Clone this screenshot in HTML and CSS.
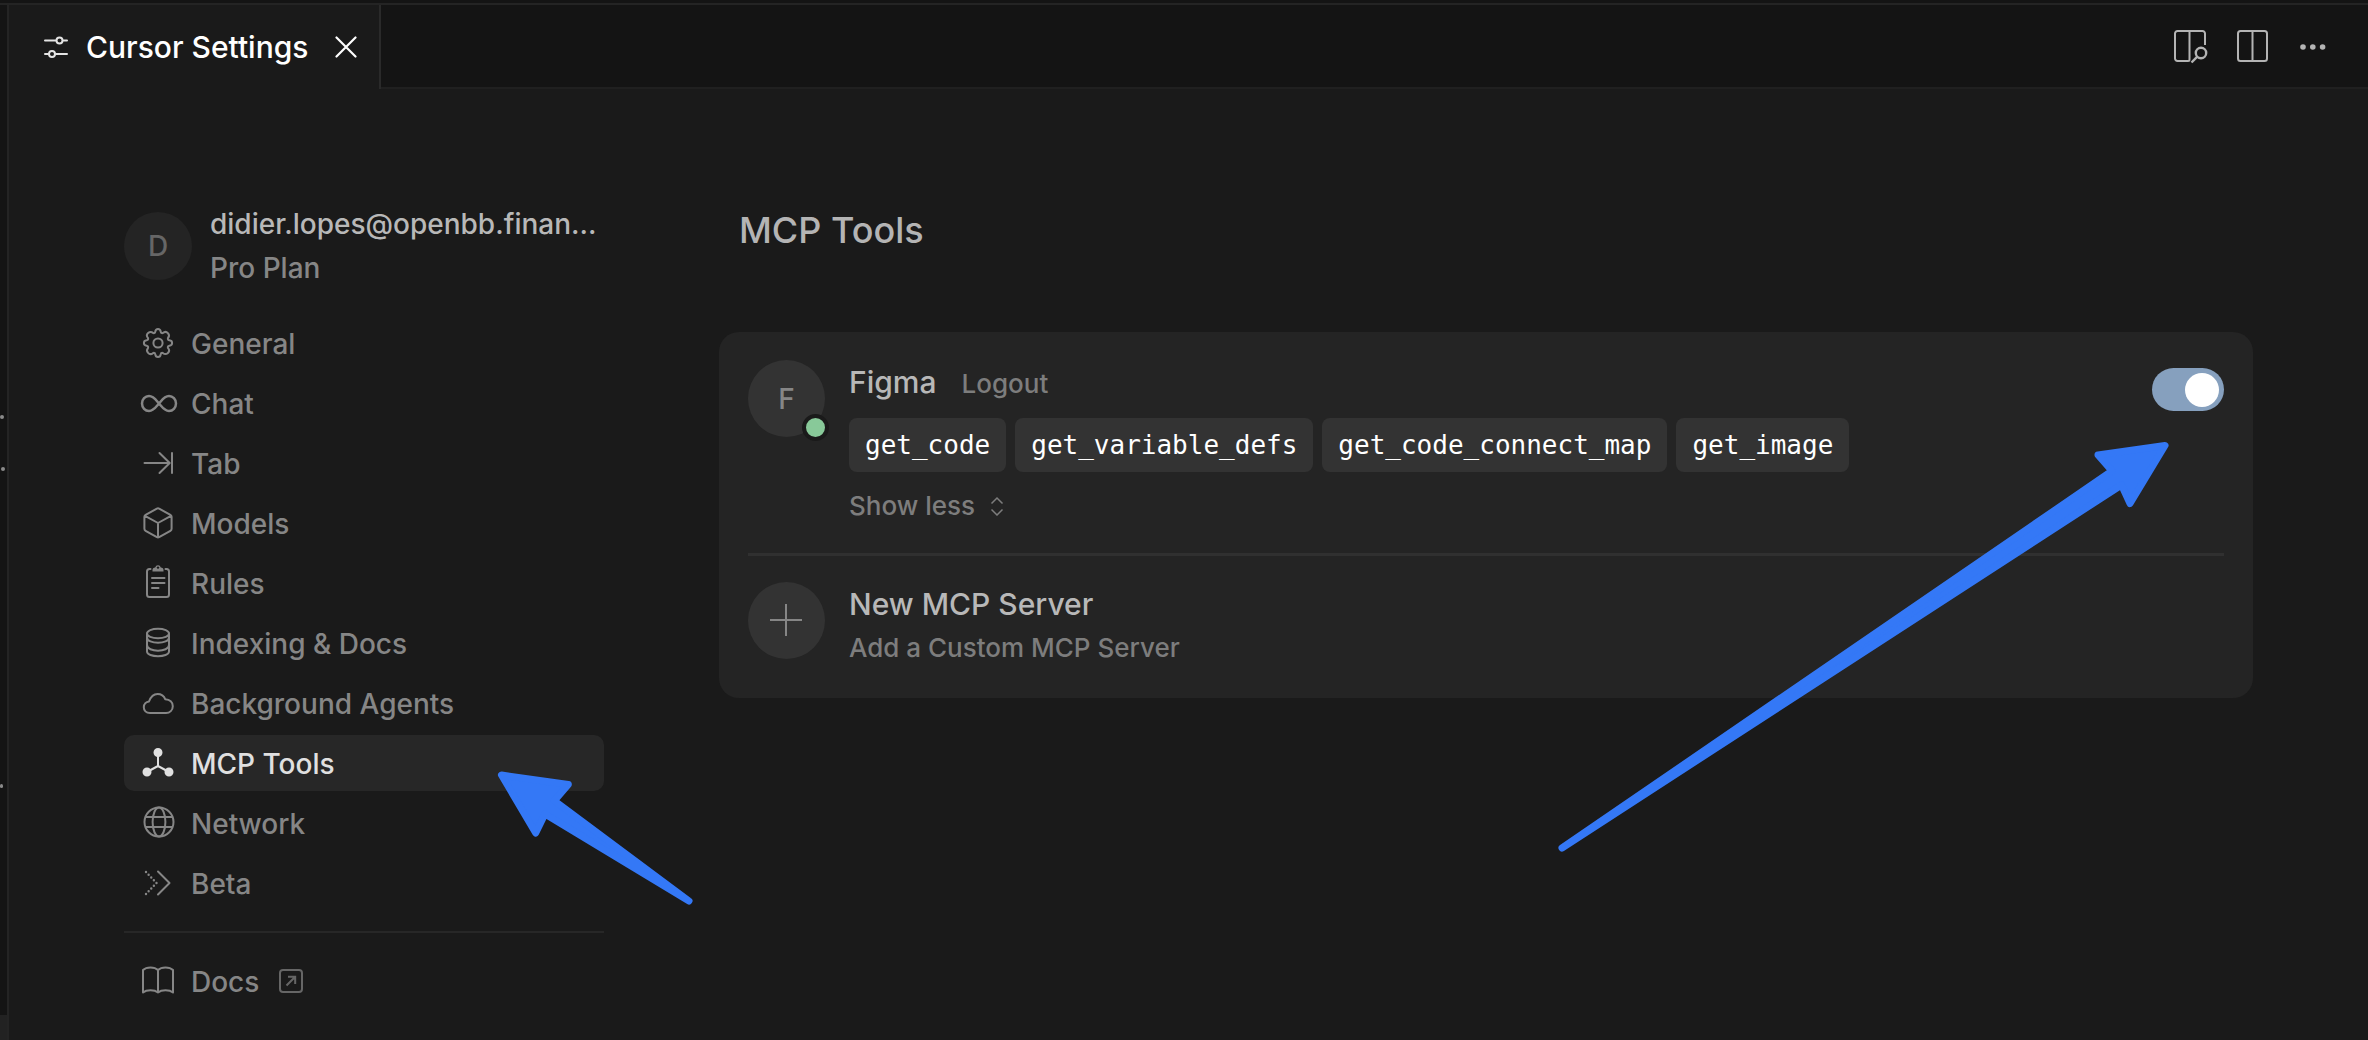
FILE: index.html
```
<!DOCTYPE html>
<html lang="en">
<head>
<meta charset="utf-8">
<title>Cursor Settings</title>
<link rel="stylesheet" href="styles.css">
</head>
<body>
<div class="window">
  <div class="edge" aria-hidden="true">
    <i class="speck speck-a"></i><i class="speck speck-b"></i><i class="speck speck-c"></i>
    <div class="edge-foot"></div>
  </div>
  <div class="editor">
    <header class="tabbar">
      <div class="tab">
        <svg class="tab-icon" width="24" height="22" viewBox="0 0 24 22" fill="none" stroke="currentColor" stroke-width="2" stroke-linecap="round"><path d="M1 4.500h11M19 4.500h4M1 18h4M12 18h11"/><circle cx="15.500" cy="4.500" r="3"/><circle cx="8" cy="18" r="3"/></svg>
        <span class="tab-title">Cursor Settings</span>
        <button class="icon-button" aria-label="Close tab"><svg width="22" height="22" viewBox="0 0 22 22" fill="none" stroke="currentColor" stroke-width="2.200" stroke-linecap="round"><path d="M1.500 1.500l19 19M20.500 1.500l-19 19"/></svg></button>
      </div>
      <div class="actions">
        <button class="icon-button" aria-label="Open preview"><svg width="34" height="34" viewBox="0 0 34 34" fill="none" stroke="currentColor" stroke-width="2"><path d="M14 31H3.500A2.500 2.500 0 0 1 1 28.500V3.500A2.500 2.500 0 0 1 3.500 1H28.500A2.500 2.500 0 0 1 31 3.500V15M15.500 1V29.500Q15.500 31 14 31"/><circle cx="27" cy="23" r="5.200" stroke-width="2.400"/><path d="M23.300 26.700L17.500 32.500" stroke-width="2.400"/></svg></button>
        <button class="icon-button" aria-label="Split editor"><svg width="34" height="34" viewBox="0 0 34 34" fill="none" stroke="currentColor" stroke-width="2"><rect x="1" y="1" width="29" height="30" rx="2.500"/><path d="M15.500 1v30"/></svg></button>
        <button class="icon-button" aria-label="More actions"><svg width="26" height="34" viewBox="0 0 26 34" fill="currentColor"><circle cx="3" cy="17" r="2.800"/><circle cx="12.800" cy="17" r="2.800"/><circle cx="22.600" cy="17" r="2.800"/></svg></button>
      </div>
    </header>

    <div class="settings">
      <aside class="sidebar">
        <div class="account">
          <div class="account-avatar">D</div>
          <div class="account-text">
            <div class="account-email">didier.lopes@openbb.finan...</div>
            <div class="account-plan">Pro Plan</div>
          </div>
        </div>
        <nav class="nav">
          <a class="nav-item" href="#general"><svg class="nav-icon" viewBox="0 0 32 32"><circle cx="16" cy="16" r="4.600"/><path d="M13.300 4.600Q13.600 1.900 16 1.900T18.700 4.600Q19 6.400 20.800 6.100Q23.600 3.600 25.900 6.100T25.900 11.200Q25.600 13.200 27.400 13.300Q30.100 13.600 30.100 16T27.400 18.700Q25.600 19 25.900 20.800Q28.400 23.600 25.900 25.900T20.800 25.900Q19 25.600 18.700 27.400Q18.400 30.100 16 30.100T13.300 27.400Q13 25.600 11.200 25.900Q8.400 28.400 6.100 25.900T6.100 20.800Q6.400 19 4.600 18.700Q1.900 18.400 1.900 16T4.600 13.300Q6.400 13 6.100 11.200Q3.600 8.400 6.100 6.100T11.200 6.100Q13 6.400 13.300 4.600Z"/></svg><span>General</span></a>
          <a class="nav-item" href="#chat"><svg class="nav-icon" viewBox="0 0 32 32"><path stroke-width="2.500" d="M17 16.500C20 13 22.500 9 27 9A7 7.500 0 0 1 27 24C22.500 24 20 20 17 16.500C14 13 11.500 9 7 9A7 7.500 0 0 0 7 24C11.500 24 14 20 17 16.500Z"/></svg><span>Chat</span></a>
          <a class="nav-item" href="#tab"><svg class="nav-icon" viewBox="0 0 32 32"><path d="M2.500 16h25M17.500 6l10.200 10l-10.200 10M30 6v20"/></svg><span>Tab</span></a>
          <a class="nav-item" href="#models"><svg class="nav-icon" viewBox="0 0 32 32"><path d="M14.900 1.600Q16 1 17.100 1.600L28.400 7.800Q29.600 8.500 29.600 9.800V21.800Q29.600 23.100 28.400 23.800L17.100 30.200Q16 30.800 14.900 30.200L3.600 23.800Q2.400 23.100 2.400 21.800V9.800Q2.400 8.500 3.600 7.800ZM3 8.800L16 16L29 8.800M16 16v14"/></svg><span>Models</span></a>
          <a class="nav-item" href="#rules"><svg class="nav-icon" viewBox="0 0 32 32"><path d="M8.500 2H7.500Q5 2 5 4.500V27.500Q5 30 7.500 30H24.500Q27 30 27 27.500V4.500Q27 2 24.500 2H23.500M10 11h12.500M10 16h12.500M10 21h6.500"/><path class="clip" d="M10.500 4.500V3Q10.500 .5 13.200 .5A2.900 2.900 0 0 1 18.800 .5Q21.500 .5 21.500 3V4.500Z"/><circle class="hole" cx="16" cy=".6" r="1.200"/></svg><span>Rules</span></a>
          <a class="nav-item" href="#indexing"><svg class="nav-icon" viewBox="0 0 32 32"><ellipse cx="16" cy="6.500" rx="11" ry="4.800"/><path d="M5 6.500V24.500C5 30.700 27 30.700 27 24.500V6.500M5 10.500C5 17.500 27 17.500 27 10.500M5 18C5 25.500 27 25.500 27 18"/></svg><span>Indexing &amp; Docs</span></a>
          <a class="nav-item" href="#agents"><svg class="nav-icon" viewBox="0 0 32 32"><path d="M8 26C4 26 1.800 23.500 1.800 20.300C1.800 17 4.200 14.800 7 14.500C8.500 10.500 11.500 7 15.500 7C19.500 7 22 9 23.200 12.200C27.800 12.500 30.800 15.300 30.800 19.200C30.800 23.200 27.800 26 24 26Z"/></svg><span>Background Agents</span></a>
          <a class="nav-item nav-item-active" href="#mcp" aria-current="page"><svg class="nav-icon" viewBox="0 0 32 32"><path d="M16 6v13M16 19L5 25M16 19l11 6"/><g class="solid"><circle cx="16" cy="5.500" r="3.500"/><circle cx="5" cy="25" r="3.500"/><circle cx="27" cy="25" r="3.500"/></g></svg><span>MCP Tools</span>
            <svg class="arrow arrow-nav" width="200" height="140" viewBox="0 0 200 140" aria-hidden="true"><path d="M7.500 8L74.300 17.500L60.400 33.700L195 134L51 47L41.700 66Z"/></svg></a>
          <a class="nav-item" href="#network"><svg class="nav-icon" viewBox="0 0 32 32"><circle cx="17" cy="15" r="14.500"/><ellipse cx="17" cy="15" rx="6.400" ry="14.500"/><path d="M4 10h26M4 20h26"/></svg><span>Network</span></a>
          <a class="nav-item" href="#beta"><svg class="nav-icon" viewBox="0 0 32 32"><path d="M16 4.500L27.500 16L16 27.500"/><path d="M4 5L14.500 16L4 27" stroke-width="2.400" stroke-dasharray="0 3.800"/></svg><span>Beta</span></a>
        </nav>
        <hr class="nav-rule">
        <a class="nav-item" href="#docs"><svg class="nav-icon" viewBox="0 0 32 32"><path d="M16 5C12.500 1.500 4.500 1.500 1 5V27.500C4.500 24.500 12.500 24.500 16 27.500C19.500 24.500 27.500 24.500 31 27.500V5C27.500 1.500 19.500 1.500 16 5ZM16 5V27.500"/></svg><span>Docs</span><svg class="external" width="24" height="24" viewBox="0 0 24 24" fill="none" stroke="currentColor" stroke-width="2"><rect x="1" y="1" width="22" height="22" rx="3"/><path d="M7.500 16.500L16 8M9 7.800h7.200V15"/></svg></a>
      </aside>

      <main class="content">
        <h1 class="title">MCP Tools</h1>
        <section class="card">
          <div class="server">
            <div class="server-avatar">F<span class="status" title="Connected"></span></div>
            <div class="server-body">
              <div class="server-head"><h2 class="server-name">Figma</h2><button class="text-button">Logout</button></div>
              <div class="tools"><code class="tool">get_code</code><code class="tool">get_variable_defs</code><code class="tool">get_code_connect_map</code><code class="tool">get_image</code></div>
              <button class="text-button show-less">Show less<svg width="14" height="20" viewBox="0 0 14 20" fill="none" stroke="currentColor" stroke-width="1.500"><path d="M1.500 7.500L7 2L12.500 7.500M1.500 13.500L7 19L12.500 13.500"/></svg></button>
            </div>
            <input class="toggle" type="checkbox" checked aria-label="Enable Figma server">
          </div>
          <button class="server server-new">
            <span class="server-avatar"><svg width="34" height="34" viewBox="0 0 34 34" fill="none" stroke="currentColor" stroke-width="2"><path d="M16 0v32M0 16h32"/></svg></span>
            <span class="server-body"><span class="server-name">New MCP Server</span><span class="server-note">Add a Custom MCP Server</span></span>
          </button>
          <svg class="arrow arrow-toggle" width="620" height="424" viewBox="0 0 620 424" aria-hidden="true"><path d="M614 15.500L547 25L561 41L11 418L570.500 55L579 73.500Z"/></svg>
        </section>
      </main>
    </div>
  </div>
</div>
</body>
</html>
```
FILE: styles.css
```
* { box-sizing: border-box; }
body {
  margin: 0;
  background: #1a1a1a;
  color: #b4b4b4;
  font-family: Inter, "Liberation Sans", sans-serif;
  font-size: 28px;
  line-height: 36px;
  font-weight: 500;
}
button { margin: 0; padding: 0; border: 0; background: none; color: inherit; font: inherit; text-align: left; }
svg { display: block; flex: none; }
h1, h2 { margin: 0; }

.window { display: flex; min-height: 100vh; border-top: 3px solid #141414; overflow: hidden; }
.edge { position: relative; display: flex; flex-direction: column; justify-content: flex-end; width: 9px; background: #141414; border-top: 2px solid #242424; border-right: 2px solid #242424; }
.edge-foot { height: 25px; background: #222; }
.speck { position: absolute; left: 0; width: 4px; height: 4px; border-radius: 2px; background: #8a8a8a; }
.speck-a { top: 410px; }
.speck-b { top: 462px; left: 1px; }
.speck-c { top: 779px; width: 3px; }
.editor { flex: 1; min-width: 0; }

.tabbar { display: flex; justify-content: space-between; height: 86px; background: #141414; border-top: 2px solid #242424; border-bottom: 2px solid #202020; }
.tab { display: flex; align-items: center; height: 84px; padding: 0 22px 0 35px; background: #1a1a1a; border-right: 2px solid #2a2a2a; color: #fff; font-size: 30px; }
.tab-title { margin: 0 27px 0 18px; }
.tab-icon { color: #e4e4e4; }
.actions { display: flex; align-items: center; gap: 29px; padding: 2px 42px 0 0; color: #b4b4b4; }

.settings { display: flex; gap: 115px; padding: 113px 115px 26px; }
.sidebar { width: 480px; flex: none; color: #868686; }
.account { display: flex; align-items: center; gap: 18px; height: 88px; margin-bottom: 25px; }
.account-avatar { display: flex; align-items: center; justify-content: center; width: 68px; height: 68px; border-radius: 50%; background: #242424; color: #666; }
.account-text { line-height: 44px; }
.account-email { color: #b8b8b8; white-space: nowrap; }

.nav { display: flex; flex-direction: column; gap: 4px; }
.nav-item { position: relative; display: flex; align-items: center; gap: 17px; height: 56px; padding: 0 18px; border-radius: 10px; color: inherit; text-decoration: none; }
.nav-item span { padding-top: 2px; }
.nav-icon { width: 32px; height: 32px; fill: none; stroke: currentColor; stroke-width: 2; stroke-linecap: round; stroke-linejoin: round; overflow: visible; }
.nav-icon .solid { fill: currentColor; }
.nav-icon .clip { fill: currentColor; stroke: none; }
.nav-icon .hole { fill: #1a1a1a; stroke: none; }
.nav-item-active { background: #272727; color: #e0e0e0; }
.nav-rule { height: 2px; margin: 20px 0; border: 0; background: #272727; }
.external { margin-left: 3px; color: #666; }

.content { flex: 1; min-width: 0; }
.title { padding: 6px 20px 0; font-size: 36px; line-height: 44px; font-weight: 500; color: #b4b4b4; }
.card { position: relative; margin-top: 80px; padding: 0 29px; border-radius: 20px; background: #242424; }
.server { display: flex; gap: 24px; width: 100%; padding: 28px 0 29px; border-bottom: 3px solid #303030; }
.server-new { border: 0; padding: 26px 0 32px; }
.server-avatar { position: relative; display: flex; align-items: center; justify-content: center; width: 77px; height: 77px; flex: none; border-radius: 50%; background: #333; color: #868686; }
.status { position: absolute; right: -4px; bottom: -4px; width: 27px; height: 27px; border: 4px solid #1a1a1a; border-radius: 50%; background: #88c999; }
.server-body { display: flex; flex: 1; flex-direction: column; min-width: 0; padding-top: 4px; }
.server-head { display: flex; align-items: baseline; gap: 25px; }
.server-name { color: #b8b8b8; font-size: 30px; line-height: 36px; font-weight: 500; }
.text-button, .server-note { color: #7d7d7d; font-size: 26px; line-height: 36px; }
.server-note { padding-top: 8px; }
.tools { display: flex; flex-wrap: wrap; gap: 9px; margin-top: 16px; }
.tool { padding: 0 16px; border-radius: 8px; background: #333; color: #fff; font: 26px/54px "DejaVu Sans Mono", monospace; }
.show-less { display: flex; align-items: center; gap: 15px; margin-top: 16px; }

.toggle { appearance: none; display: flex; justify-content: flex-end; align-items: center; width: 72px; height: 43px; margin: 8px 0 0; padding: 0 5px; border-radius: 22px; background: #86a0be; }
.toggle::before { content: ""; width: 34px; height: 34px; border-radius: 50%; background: #fff; }
.toggle:not(:checked) { justify-content: flex-start; background: #444; }

/* Callout arrows lie over the controls they point at. */
.arrow { position: absolute; z-index: 1; fill: #3478f6; stroke: #3478f6; stroke-width: 7; stroke-linejoin: round; pointer-events: none; }
.arrow-nav { left: 370px; top: 32px; }
.arrow-toggle { right: 82px; top: 98px; }
```
